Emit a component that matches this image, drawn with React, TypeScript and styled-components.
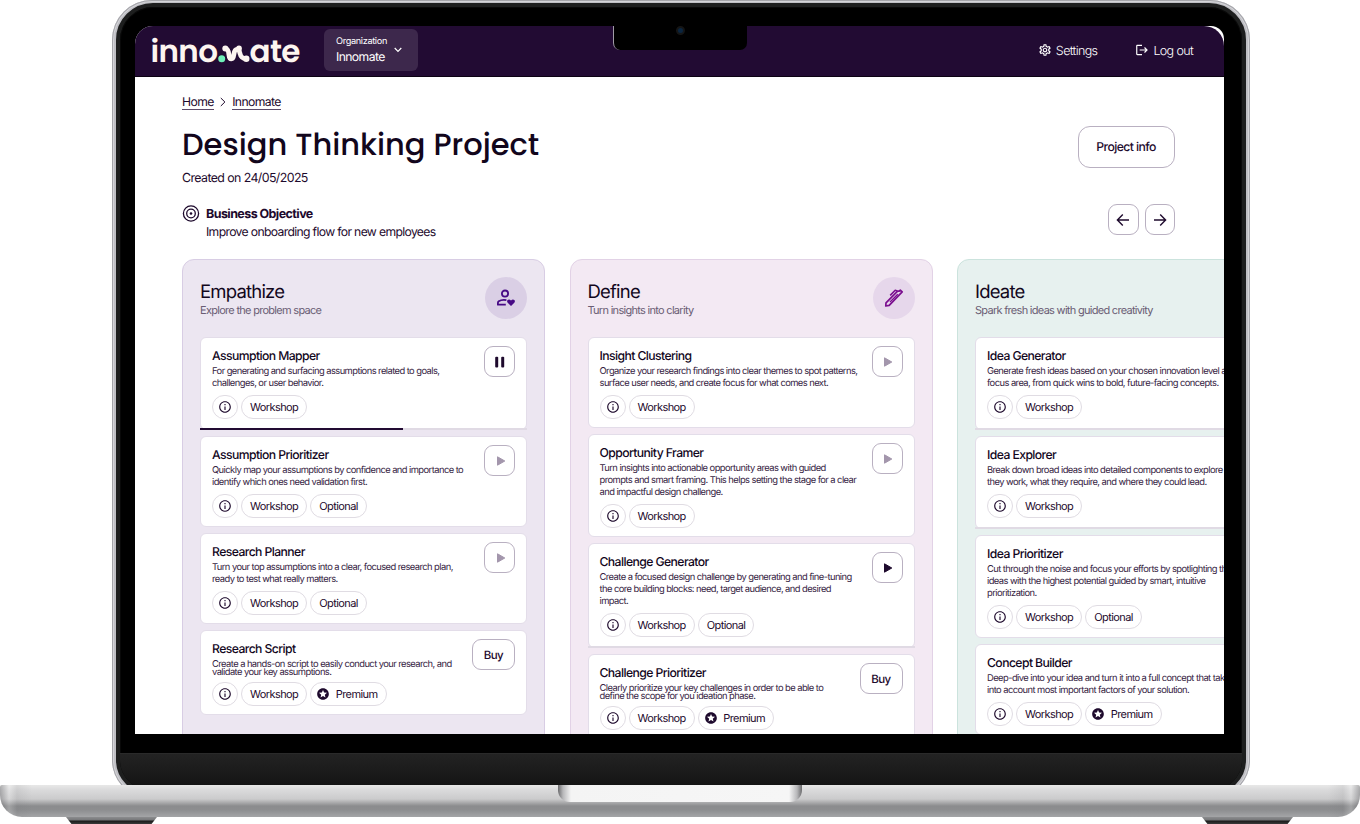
import React from 'react';
import styled, { createGlobalStyle, css } from 'styled-components';
import {
  MdInfoOutline,
  MdLogout,
  MdOutlineSettings,
  MdStars,
} from 'react-icons/md';

type ActionType = 'pause' | 'play' | 'locked' | 'buy';
type TagType = 'Workshop' | 'Optional' | 'Premium';

interface ToolType {
  title: string;
  lines: string[];
  tags: TagType[];
  action: ActionType;
  progress?: number;
  tight?: boolean;
}

interface PhaseType {
  name: string;
  subtitle: string;
  background: string;
  border: string;
  badge: string;
  icon?: React.ReactNode;
  tools: ToolType[];
}

const EmpathizeIcon = () => (
  <svg width='20' height='20' viewBox='0 0 20 20' fill='none'>
    <circle cx='9' cy='5.6' r='3.1' stroke='#470a85' strokeWidth='1.8' />
    <path
      d='M10.4 12.1C7.2 11.5 4.400 12.200 2.700 13.300C2 13.800 1.900 14.400 1.900 15V16.700H9.800'
      stroke='#470a85'
      strokeWidth='1.8'
      strokeLinejoin='round'
    />
    <path
      d='M15 18L11.700 14.700C10.900 13.800 10.900 12.600 11.700 11.900C12.600 11.100 13.900 11.200 15 12.400C16.100 11.200 17.400 11.100 18.300 11.900C19.100 12.600 19.100 13.800 18.300 14.700Z'
      fill='#470a85'
    />
  </svg>
);

const DefineIcon = () => (
  <svg width='20' height='20' viewBox='0 0 20 20' fill='none'>
    <path
      d='M1.800 18L2 14.800L13.600 3.100L15.200 3.200L16.300 2.200L18.200 3.900L5.200 17.400Z'
      stroke='#7b0f8f'
      strokeWidth='1.7'
      strokeLinejoin='round'
    />
    <path d='M6 14L13.800 6.200' stroke='#7b0f8f' strokeWidth='1.300' />
    <path
      d='M6.200 7.400L11.200 2.300L13.300 3'
      stroke='#7b0f8f'
      strokeWidth='1.6'
      strokeLinejoin='round'
    />
  </svg>
);

const PHASES: PhaseType[] = [
  {
    name: 'Empathize',
    subtitle: 'Explore the problem space',
    background: '#ece6f1',
    border: '#d8cde4',
    badge: '#dacfe5',
    icon: <EmpathizeIcon />,
    tools: [
      {
        title: 'Assumption Mapper',
        lines: [
          'For generating and surfacing assumptions related to goals,',
          'challenges, or user behavior.',
        ],
        tags: ['Workshop'],
        action: 'pause',
        progress: 62,
      },
      {
        title: 'Assumption Prioritizer',
        lines: [
          'Quickly map your assumptions by confidence and importance to',
          'identify which ones need validation first.',
        ],
        tags: ['Workshop', 'Optional'],
        action: 'locked',
      },
      {
        title: 'Research Planner',
        lines: [
          'Turn your top assumptions into a clear, focused research plan,',
          'ready to test what really matters.',
        ],
        tags: ['Workshop', 'Optional'],
        action: 'locked',
      },
      {
        title: 'Research Script',
        lines: [
          'Create a hands-on script to easily conduct your research, and',
          'validate your key assumptions.',
        ],
        tags: ['Workshop', 'Premium'],
        action: 'buy',
        tight: true,
      },
    ],
  },
  {
    name: 'Define',
    subtitle: 'Turn insights into clarity',
    background: '#f3e9f3',
    border: '#e2d2e6',
    badge: '#e6d7eb',
    icon: <DefineIcon />,
    tools: [
      {
        title: 'Insight Clustering',
        lines: [
          'Organize your research findings into clear themes to spot patterns,',
          'surface user needs, and create focus for what comes next.',
        ],
        tags: ['Workshop'],
        action: 'locked',
      },
      {
        title: 'Opportunity Framer',
        lines: [
          'Turn insights into actionable opportunity areas with guided',
          'prompts and smart framing. This helps setting the stage for a clear',
          'and impactful design challenge.',
        ],
        tags: ['Workshop'],
        action: 'locked',
      },
      {
        title: 'Challenge Generator',
        lines: [
          'Create a focused design challenge by generating and fine-tuning',
          'the core building blocks: need, target audience, and desired',
          'impact.',
        ],
        tags: ['Workshop', 'Optional'],
        action: 'play',
        progress: 0,
      },
      {
        title: 'Challenge Prioritizer',
        lines: [
          'Clearly prioritize your key challenges in order to be able to',
          'define the scope for you ideation phase.',
        ],
        tags: ['Workshop', 'Premium'],
        action: 'buy',
        tight: true,
      },
    ],
  },
  {
    name: 'Ideate',
    subtitle: 'Spark fresh ideas with guided creativity',
    background: '#e7f1ef',
    border: '#cbe3dd',
    badge: '#d0e6e1',
    tools: [
      {
        title: 'Idea Generator',
        lines: [
          'Generate fresh ideas based on your chosen innovation level and',
          'focus area, from quick wins to bold, future-facing concepts.',
        ],
        tags: ['Workshop'],
        action: 'play',
        progress: 0,
      },
      {
        title: 'Idea Explorer',
        lines: [
          'Break down broad ideas into detailed components to explore how',
          'they work, what they require, and where they could lead.',
        ],
        tags: ['Workshop'],
        action: 'play',
        progress: 0,
      },
      {
        title: 'Idea Prioritizer',
        lines: [
          'Cut through the noise and focus your efforts by spotlighting the',
          'ideas with the highest potential guided by smart, intuitive',
          'prioritization.',
        ],
        tags: ['Workshop', 'Optional'],
        action: 'locked',
      },
      {
        title: 'Concept Builder',
        lines: [
          'Deep-dive into your idea and turn it into a full concept that takes',
          'into account most important factors of your solution.',
        ],
        tags: ['Workshop', 'Premium'],
        action: 'buy',
      },
    ],
  },
];

const Logo = () => (
  <svg width='150' height='36' viewBox='0 -3 150 36'>
    <LogoText x='-0.500' y='27' textLength='67.500'>
      inno
    </LogoText>
    <circle cx='70.700' cy='23.700' r='3.500' fill='#6ff0b8' />
    <path
      d='M74.500 13.500C80 14.500 76 23.800 80.300 23.800C84.400 23.800 81.300 14.500 86 14.500C90.700 14.500 86.500 23.500 95 23.700'
      fill='none'
      stroke='#fdf5f0'
      strokeLinecap='round'
      strokeWidth='4.800'
    />
    <circle cx='74.300' cy='13.500' r='3' fill='#fdf5f0' />
    <circle cx='88' cy='13.500' r='2.900' fill='#fdf5f0' />
    <circle cx='95.300' cy='23.700' r='3.200' fill='#fdf5f0' />
    <LogoText x='98.500' y='27' textLength='51'>
      ate
    </LogoText>
  </svg>
);

const ActionIcon = ({ action }: { action: ActionType }) => {
  if (action === 'pause') {
    return (
      <svg width='12' height='12' viewBox='0 0 12 12' fill='#1e0a2d'>
        <rect x='1.200' y='0.700' width='3' height='10.800' rx='1' />
        <rect x='7.200' y='0.700' width='3' height='10.800' rx='1' />
      </svg>
    );
  }

  return (
    <svg width='12' height='12' viewBox='0 0 12 12'>
      <path
        d='M3.500 1.800L10.800 6L3.500 10.200Z'
        fill={action === 'play' ? '#1e0a2d' : '#a396ac'}
        stroke={action === 'play' ? '#1e0a2d' : '#a396ac'}
        strokeLinejoin='round'
      />
    </svg>
  );
};

const ToolCard = ({ tool }: { tool: ToolType }) => (
  <Card>
    <CardBody>
      <CardText>
        <CardTitle>{tool.title}</CardTitle>
        <Description $tight={tool.tight}>
          {tool.lines.map((line) => (
            <span key={line}>{line}</span>
          ))}
        </Description>
        <Tags>
          <InfoTag>
            <MdInfoOutline size={14} />
          </InfoTag>
          {tool.tags.map((tag) => (
            <Tag key={tag} $icon={tag === 'Premium'}>
              {tag === 'Premium' && <MdStars size={14} />}
              {tag}
            </Tag>
          ))}
        </Tags>
      </CardText>
      <ActionButton $wide={tool.action === 'buy'}>
        {tool.action === 'buy' ? 'Buy' : <ActionIcon action={tool.action} />}
      </ActionButton>
    </CardBody>
    {tool.progress !== undefined && (
      <Track>
        <Bar style={{ width: `${tool.progress}%` }} />
      </Track>
    )}
  </Card>
);

const App: React.FC = () => {
  return (
    <Page>
      <GlobalStyle />
      <LidArea>
        <Lid>
          <Bezel>
            <Screen>
              <Header>
                <Logo />
                <OrgSelect>
                  <div>
                    <OrgLabel>Organization</OrgLabel>
                    <OrgName>Innomate</OrgName>
                  </div>
                  <svg width='8' height='6' viewBox='0 0 8 6' fill='none'>
                    <path d='M0.700 1L4 4.300L7.300 1' stroke='#fff' strokeWidth='1.200' />
                  </svg>
                </OrgSelect>
                <HeaderNav>
                  <HeaderLink>
                    <MdOutlineSettings size={14} />
                    <HeaderLabel>Settings</HeaderLabel>
                  </HeaderLink>
                  <HeaderLink>
                    <MdLogout size={14} />
                    <HeaderLabel>Log out</HeaderLabel>
                  </HeaderLink>
                </HeaderNav>
              </Header>
              <Main>
                <Breadcrumb>
                  <Crumb>Home</Crumb>
                  <svg width='6' height='10' viewBox='0 0 6 10' fill='none'>
                    <path d='M0.800 1L4.900 5L0.800 9' stroke='#1e0a2d' />
                  </svg>
                  <Crumb>Innomate</Crumb>
                </Breadcrumb>
                <TitleRow>
                  <div>
                    <Title>Design Thinking Project</Title>
                    <Created>Created on 24/05/2025</Created>
                  </div>
                  <InfoButton>Project info</InfoButton>
                </TitleRow>
                <ObjectiveRow>
                  <svg width='18' height='18' viewBox='0 0 18 18' fill='none' stroke='#1e0a2d'>
                    <circle cx='9' cy='9.500' r='7.600' strokeWidth='1.300' />
                    <circle cx='9' cy='9.500' r='4.300' strokeWidth='1.300' />
                    <circle cx='9' cy='9.500' r='1.300' fill='#1e0a2d' stroke='none' />
                  </svg>
                  <Objective>
                    <strong>Business Objective</strong>
                    <ObjectiveText>Improve onboarding flow for new employees</ObjectiveText>
                  </Objective>
                  <Arrows>
                    <ArrowButton>
                      <svg width='14' height='14' viewBox='0 0 14 14' fill='none'>
                        <path d='M13 7H1.500M6.800 1.600L1.400 7L6.800 12.400' stroke='#1e0a2d' strokeWidth='1.400' />
                      </svg>
                    </ArrowButton>
                    <ArrowButton>
                      <svg width='14' height='14' viewBox='0 0 14 14' fill='none'>
                        <path d='M1 7H12.500M7.200 1.600L12.600 7L7.200 12.400' stroke='#1e0a2d' strokeWidth='1.400' />
                      </svg>
                    </ArrowButton>
                  </Arrows>
                </ObjectiveRow>
                <Board>
                  {PHASES.map((phase) => (
                    <Phase key={phase.name} $background={phase.background} $border={phase.border}>
                      <PhaseHeader>
                        <div>
                          <PhaseName>{phase.name}</PhaseName>
                          <PhaseSubtitle>{phase.subtitle}</PhaseSubtitle>
                        </div>
                        <Badge $color={phase.badge}>{phase.icon}</Badge>
                      </PhaseHeader>
                      {phase.tools.map((tool) => (
                        <ToolCard key={tool.title} tool={tool} />
                      ))}
                    </Phase>
                  ))}
                </Board>
              </Main>
            </Screen>
            <Notch>
              <Camera />
            </Notch>
            <Chin />
          </Bezel>
        </Lid>
      </LidArea>
      <Base>
        <Groove />
      </Base>
      <Feet>
        <Foot />
        <Foot />
      </Feet>
    </Page>
  );
};

export default App;

const GlobalStyle = createGlobalStyle`
  * {
    box-sizing: border-box;
  }
  body {
    margin: 0;
    background: #fff;
    color: #1e0a2d;
    font-family: Inter, 'Liberation Sans', sans-serif;
    text-rendering: geometricPrecision;
    overflow: hidden;
  }
  svg {
    display: block;
    flex-shrink: 0;
  }
  button {
    padding: 0;
    font-family: inherit;
    color: inherit;
    background: #fff;
    text-rendering: inherit;
  }
`;

const Page = styled.div`
  width: 1360px;
  height: 824px;
  overflow: hidden;
`;

const LidArea = styled.div`
  height: 785px;
  overflow: hidden;
`;

const Lid = styled.div`
  width: 1137.5px;
  height: 798px;
  margin-left: 112px;
  padding: 3px 4px 4px;
  border-radius: 40px 40px 38px 38px;
  background: #bfbfc4;
  box-shadow: inset 0 0 0 1px #a5a5aa, inset 0 0 0 2px #d4d4d8;
`;

const Bezel = styled.div`
  position: relative;
  height: 791px;
  padding: 19px 15px 0;
  border: 4px solid #1d1e1e;
  border-radius: 37px 37px 34px 34px;
  background: #000;
  box-shadow: inset 0 0 0 1px #090909;
  overflow: hidden;
`;

const Screen = styled.div`
  width: 1089px;
  height: 708px;
  border-radius: 18px 13px 0 0;
  background: #fff;
  overflow: hidden;
`;

const Header = styled.header`
  display: flex;
  align-items: center;
  height: 51px;
  padding: 0 31px 2px 16px;
  border-bottom: 1px solid #0c0213;
  border-radius: 0 20px 0 0;
  background: #220b33;
  color: #fff;
`;

const LogoText = styled.text`
  fill: #fdf5f0;
  font-family: Poppins, Inter, sans-serif;
  font-size: 31px;
  font-weight: 600;
`;

const OrgSelect = styled.div`
  display: flex;
  align-items: center;
  justify-content: space-between;
  width: 94px;
  height: 42px;
  margin-left: 23px;
  padding: 0 16px 0 12px;
  border-radius: 6px;
  background: #3d284c;
`;

const OrgLabel = styled.div`
  font-size: 9.2px;
  line-height: 14px;
  letter-spacing: -0.35px;
`;

const OrgName = styled.div`
  padding-bottom: 1px;
  font-size: 12.2px;
  line-height: 16px;
  letter-spacing: -0.6px;
`;

const HeaderNav = styled.nav`
  display: flex;
  gap: 38px;
  margin-left: auto;
`;

const HeaderLink = styled.div`
  display: flex;
  align-items: center;
  gap: 4px;
`;

const HeaderLabel = styled.span`
  padding-top: 2px;
  font-size: 12.5px;
  font-weight: 300;
  letter-spacing: -0.63px;
`;

const Main = styled.main`
  padding: 16px 49px 0 47px;
`;

const Breadcrumb = styled.nav`
  display: flex;
  align-items: center;
  gap: 6.200px;
  height: 17px;
`;

const Crumb = styled.a`
  padding-top: 1px;
  border-bottom: 1px solid #5b4a68;
  font-size: 12.2px;
  line-height: 15px;
  letter-spacing: -0.6px;
`;

const TitleRow = styled.div`
  display: flex;
  justify-content: space-between;
  margin-top: 15.500px;
`;

const Title = styled.h1`
  margin: 0.500px 0 0;
  color: #12061c;
  font-family: Poppins, Inter, sans-serif;
  font-size: 30.500px;
  font-weight: 500;
  line-height: 38px;
`;

const Created = styled.div`
  margin-top: 6px;
  font-size: 12.4px;
  line-height: 16px;
  letter-spacing: -0.6px;
`;

const outline = css`
  display: flex;
  align-items: center;
  justify-content: center;
  border: 1px solid #b9b0c1;
`;

const InfoButton = styled.button`
  ${outline}
  width: 97px;
  height: 42px;
  padding: 0 1px 1px 0;
  border-radius: 12px;
  font-size: 12.2px;
  font-weight: 500;
  letter-spacing: -0.58px;
`;

const ObjectiveRow = styled.div`
  display: flex;
  gap: 6px;
  margin-top: 18px;
`;

const Objective = styled.div`
  display: flex;
  flex-direction: column;
  padding-top: 2px;
  font-size: 12.5px;
  line-height: 18px;
  letter-spacing: -0.57px;
`;

const ObjectiveText = styled.span`
  font-size: 12.2px;
  line-height: 16px;
  letter-spacing: -0.66px;
`;

const Arrows = styled.div`
  display: flex;
  gap: 6px;
  height: 36px;
  margin-left: auto;
`;

const ArrowButton = styled.button`
  ${outline}
  width: 30.500px;
  height: 31px;
  border-radius: 9px;
`;

const Board = styled.div`
  display: flex;
  gap: 24.500px;
  margin-top: 19px;
`;

const Phase = styled.section<{ $background: string; $border: string }>`
  display: flex;
  flex-direction: column;
  flex-shrink: 0;
  gap: 6.500px;
  width: 363px;
  height: 600px;
  padding: 17px;
  border: 1px solid ${(props) => props.$border};
  border-radius: 12px;
  background: ${(props) => props.$background};
`;

const PhaseHeader = styled.div`
  display: flex;
  justify-content: space-between;
  height: 53.500px;
`;

const PhaseName = styled.h2`
  margin: 4px 0 0;
  color: #12061c;
  font-size: 18.500px;
  font-weight: 400;
  line-height: 22px;
  letter-spacing: -0.8px;
`;

const PhaseSubtitle = styled.div`
  color: #6a5d74;
  font-size: 11px;
  line-height: 14px;
  letter-spacing: -0.71px;
`;

const Badge = styled.div<{ $color: string }>`
  display: flex;
  align-items: center;
  justify-content: center;
  width: 42px;
  height: 42px;
  border-radius: 50%;
  background: ${(props) => props.$color};
`;

const Card = styled.article`
  flex-shrink: 0;
  border: 1px solid #e3dde9;
  border-radius: 6px;
  background: #fff;
`;

const CardBody = styled.div`
  display: flex;
  justify-content: space-between;
  padding: 8px 11px 8px;
`;

const CardText = styled.div`
  padding-top: 2px;
  white-space: nowrap;
`;

const CardTitle = styled.h3`
  margin: 0;
  color: #12061c;
  font-size: 12.200px;
  font-weight: 500;
  line-height: 16px;
  letter-spacing: -0.58px;
`;

const Description = styled.p<{ $tight?: boolean }>`
  display: flex;
  flex-direction: column;
  margin: ${(props) => (props.$tight ? '3.500px 0 4px' : '2px 0 4.500px')};
  color: #35233f;
  font-size: 9.4px;
  line-height: ${(props) => (props.$tight ? '8.500px' : '12px')};
  letter-spacing: -0.57px;
`;

const Tags = styled.div`
  display: flex;
  gap: 3px;
`;

const Tag = styled.span<{ $icon?: boolean }>`
  display: flex;
  align-items: center;
  gap: 5.500px;
  height: 24px;
  padding: 0 8px 0 ${(props) => (props.$icon ? '5px' : '8px')};
  border: 1px solid #e0dce3;
  border-radius: 12px;
  font-size: 11px;
  letter-spacing: -0.58px;
`;

const InfoTag = styled(Tag)`
  width: 26px;
  padding: 0;
  justify-content: center;
`;

const ActionButton = styled.button<{ $wide: boolean }>`
  ${outline}
  flex-shrink: 0;
  width: ${(props) => (props.$wide ? '43px' : '31px')};
  height: 31px;
  border-radius: 9px;
  font-size: 11.500px;
  font-weight: 500;
  letter-spacing: -0.6px;
`;

const Track = styled.div`
  height: 2px;
  margin: 1px -1px -1px;
  background: #e0dae4;
`;

const Bar = styled.div`
  height: 2px;
  background: #220b33;
`;

/* notch sits over the app header */
const Notch = styled.div`
  position: absolute;
  top: 19px;
  left: 493px;
  display: flex;
  justify-content: center;
  width: 134px;
  height: 24px;
  border-left: 1px solid #a09ca5;
  border-radius: 0 0 7px 7px;
  background: #000;
`;

const Camera = styled.div`
  width: 9px;
  height: 9px;
  border: 2px solid #151515;
  border-radius: 50%;
  background: #0a2540;
`;

const Chin = styled.div`
  height: 40px;
  margin: 19px -15px 0;
  border-top: 1px solid #2a2a2a;
  background: linear-gradient(#232323, #141414 32px);
`;

const Base = styled.div`
  display: flex;
  justify-content: center;
  height: 32px;
  border-radius: 2px 2px 22px 22px;
  background: linear-gradient(
      90deg,
      rgba(90, 90, 94, 0.4) 0,
      rgba(255, 255, 255, 0.2) 9px,
      rgba(110, 110, 114, 0.12) 17px,
      transparent 32px,
      transparent 1328px,
      rgba(110, 110, 114, 0.12) 1343px,
      rgba(255, 255, 255, 0.2) 1351px,
      rgba(90, 90, 94, 0.4) 1360px
    ),
    linear-gradient(#e8e8e8 0, #dadadb 5px, #cbcbcc 14px, #8b8c8e 21px, #8d8e90 25px, #a4a5a7 32px);
`;

const Groove = styled.div`
  width: 244px;
  height: 17px;
  border-radius: 0 0 12px 12px;
  background: linear-gradient(
    90deg,
    #6b6b6d 0,
    #b8b8ba 5px,
    #f4f4f4 13px,
    #f6f6f6 231px,
    #b8b8ba 239px,
    #6b6b6d 244px
  );
`;

const Feet = styled.div`
  display: flex;
  justify-content: space-between;
  padding: 0 67px 0 66px;
`;

const Foot = styled.div`
  width: 91px;
  height: 7px;
  clip-path: polygon(0 0, 100% 0, 94% 100%, 6% 100%);
  background: linear-gradient(#8b8c8e 0, #77787a 3px, #1b1b1b 4px, #3a3a3a 7px);
`;
